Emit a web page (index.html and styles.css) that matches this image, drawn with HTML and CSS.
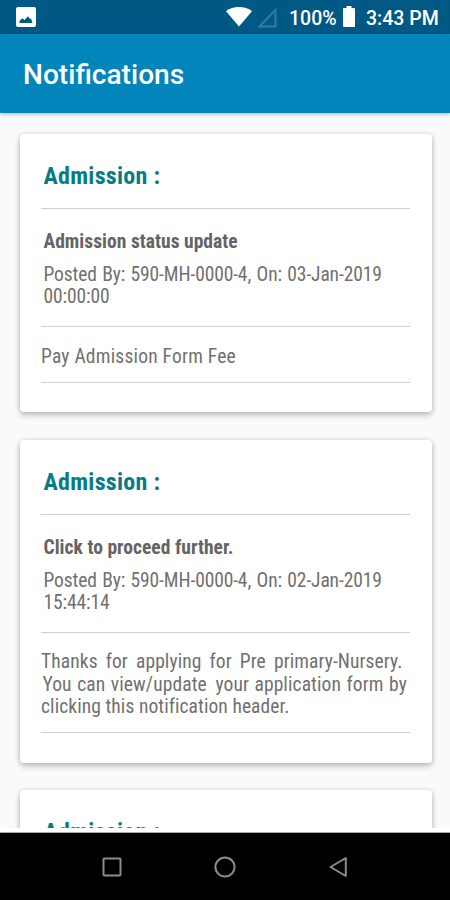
FILE: index.html
```
<!DOCTYPE html>
<html lang="en">
<head>
<meta charset="utf-8">
<title>Notifications</title>
<link rel="stylesheet" href="styles.css">
</head>
<body>
<div class="screen">
  <div class="status">
    <svg class="photo" width="20" height="20" viewBox="0 0 20 20"><rect width="20" height="20" rx="2" fill="#fff"/><path d="M3.500 16v-2l3-2.700 2 1.700 3.500-3.700 2 2.700 1-.5 1.500 4.500z" fill="#005985"/></svg>
    <svg class="wifi" width="26" height="20" viewBox="0 0 26 20"><path d="M0 4.200C7-1.300 19-1.300 26 4.200L13 19.500z" fill="#fff"/></svg>
    <svg class="signal" width="20" height="20" viewBox="0 0 20 20"><path d="M18.500 1.800v16.700H2.500z" fill="none" stroke="#3679a0" stroke-width="2"/></svg>
    <span class="percent">100%</span>
    <svg class="battery" width="12" height="21" viewBox="0 0 12 21"><path d="M3.500 0h5v2H11q1 0 1 1v17q0 1-1 1H1q-1 0-1-1V3q0-1 1-1h2.500z" fill="#fff"/></svg>
    <span class="clock">3:43 PM</span>
  </div>
  <header class="appbar"><h1>Notifications</h1></header>
  <main class="list">
    <article class="card">
      <h2>Admission :</h2>
      <div class="meta">
        <h3>Admission status update</h3>
        <p>Posted By: 590-MH-0000-4, On: 03-Jan-2019<br>00:00:00</p>
      </div>
      <div class="message short"><p>Pay Admission Form Fee</p></div>
    </article>
    <article class="card second">
      <h2>Admission :</h2>
      <div class="meta">
        <h3>Click to proceed further.</h3>
        <p>Posted By: 590-MH-0000-4, On: 02-Jan-2019<br>15:44:14</p>
      </div>
      <div class="message long"><p class="l1">Thanks for applying for Pre primary-Nursery.</p><p class="l2">You can view/update<span class="wide"> </span>your application form by</p><p class="l3">clicking this notification header.</p></div>
    </article>
    <article class="card third"><h2>Admission :</h2></article>
  </main>
  <div class="edge"></div>
  <nav class="nav">
    <svg width="20" height="20" viewBox="0 0 20 20"><rect x="1.500" y="1.500" width="17" height="17" rx="1"/></svg>
    <svg width="22" height="22" viewBox="0 0 22 22"><circle cx="11" cy="11" r="9.600"/></svg>
    <svg width="20" height="22" viewBox="0 0 20 22"><path d="M17.800 2v18L2.500 11z"/></svg>
  </nav>
</div>
</body>
</html>
```
FILE: styles.css
```
* { box-sizing: border-box; margin: 0; padding: 0; }
body { width: 450px; height: 900px; overflow: hidden; font-family: "Roboto Condensed", Roboto, sans-serif; font-stretch: 75%; }
.screen { display: flex; flex-direction: column; height: 900px; background: #fafafa; }
.status { height: 34px; flex: none; background: #005985; color: #fff; display: flex; align-items: flex-start; padding: 7px 11px 0 16px; font: 500 19.500px/22px Roboto, sans-serif; }
.status svg { flex: none; }
.wifi { margin-left: 190px; }
.signal { margin: 1px 0 0 5px; }
.percent { margin: 1px 0 0 12px; width: 48px; }
.battery { margin: -1px 0 0 6px; }
.clock { margin: 1px 0 0 11px; white-space: nowrap; }
.appbar { height: 79px; flex: none; background: #0285ba; color: #fff; padding: 25px 23px 0; box-shadow: 0 1px 4px rgba(0,0,0,.3); position: relative; }
.appbar h1 { font: 500 28.100px/32px Roboto, sans-serif; }
.list { height: 715px; flex: none; overflow: hidden; padding: 21px 18.500px 0 19.500px; display: flex; flex-direction: column; gap: 28px; }
.card { flex: none; height: 278px; border-radius: 4px; background: #fff; padding: 0 22px 0 21.500px; box-shadow: 0 3px 6px rgba(0,0,0,.24), 0 0 5px rgba(0,0,0,.1); }
.second { height: 323px; }
.third { margin-top: -1px; height: 278px; }
h2 { height: 75px; padding: 28px 2.500px 0; border-bottom: 1px solid #cfcfcf; color: #087c84; font-size: 24px; line-height: 28px; font-weight: 700; letter-spacing: .27px; white-space: nowrap; }
.meta { height: 118px; padding: 21px 2.500px 0; border-bottom: 1px solid #cfcfcf; color: #707070; white-space: nowrap; }
h3 { font-size: 19.500px; line-height: 23px; font-weight: 700; color: #646464; letter-spacing: .03px; }
.meta p { margin-top: 11px; font-size: 19.500px; line-height: 22.400px; letter-spacing: -.12px; word-spacing: 1.100px; }
.message { border-bottom: 1px solid #cfcfcf; color: #707070; padding-top: 18.500px; font-size: 19.500px; line-height: 22.500px; white-space: nowrap; letter-spacing: .22px; }
.short { height: 56px; }
.long { height: 100px; padding-top: 18px; }
.l1 { letter-spacing: .1px; word-spacing: 3.500px; }
.l2 { letter-spacing: .11px; word-spacing: .9px; padding-left: 1.500px; }
.l2 .wide { word-spacing: 4px; }
.l3 { letter-spacing: .08px; }
.edge { flex: none; height: 5px; background: #fff; border-bottom: 1px solid #aaa; }
.nav { flex: 1; background: #000; display: flex; align-items: center; justify-content: center; gap: 92px; }
.nav svg { fill: none; stroke: #8c8c8c; stroke-width: 2; stroke-linejoin: round; }
```
